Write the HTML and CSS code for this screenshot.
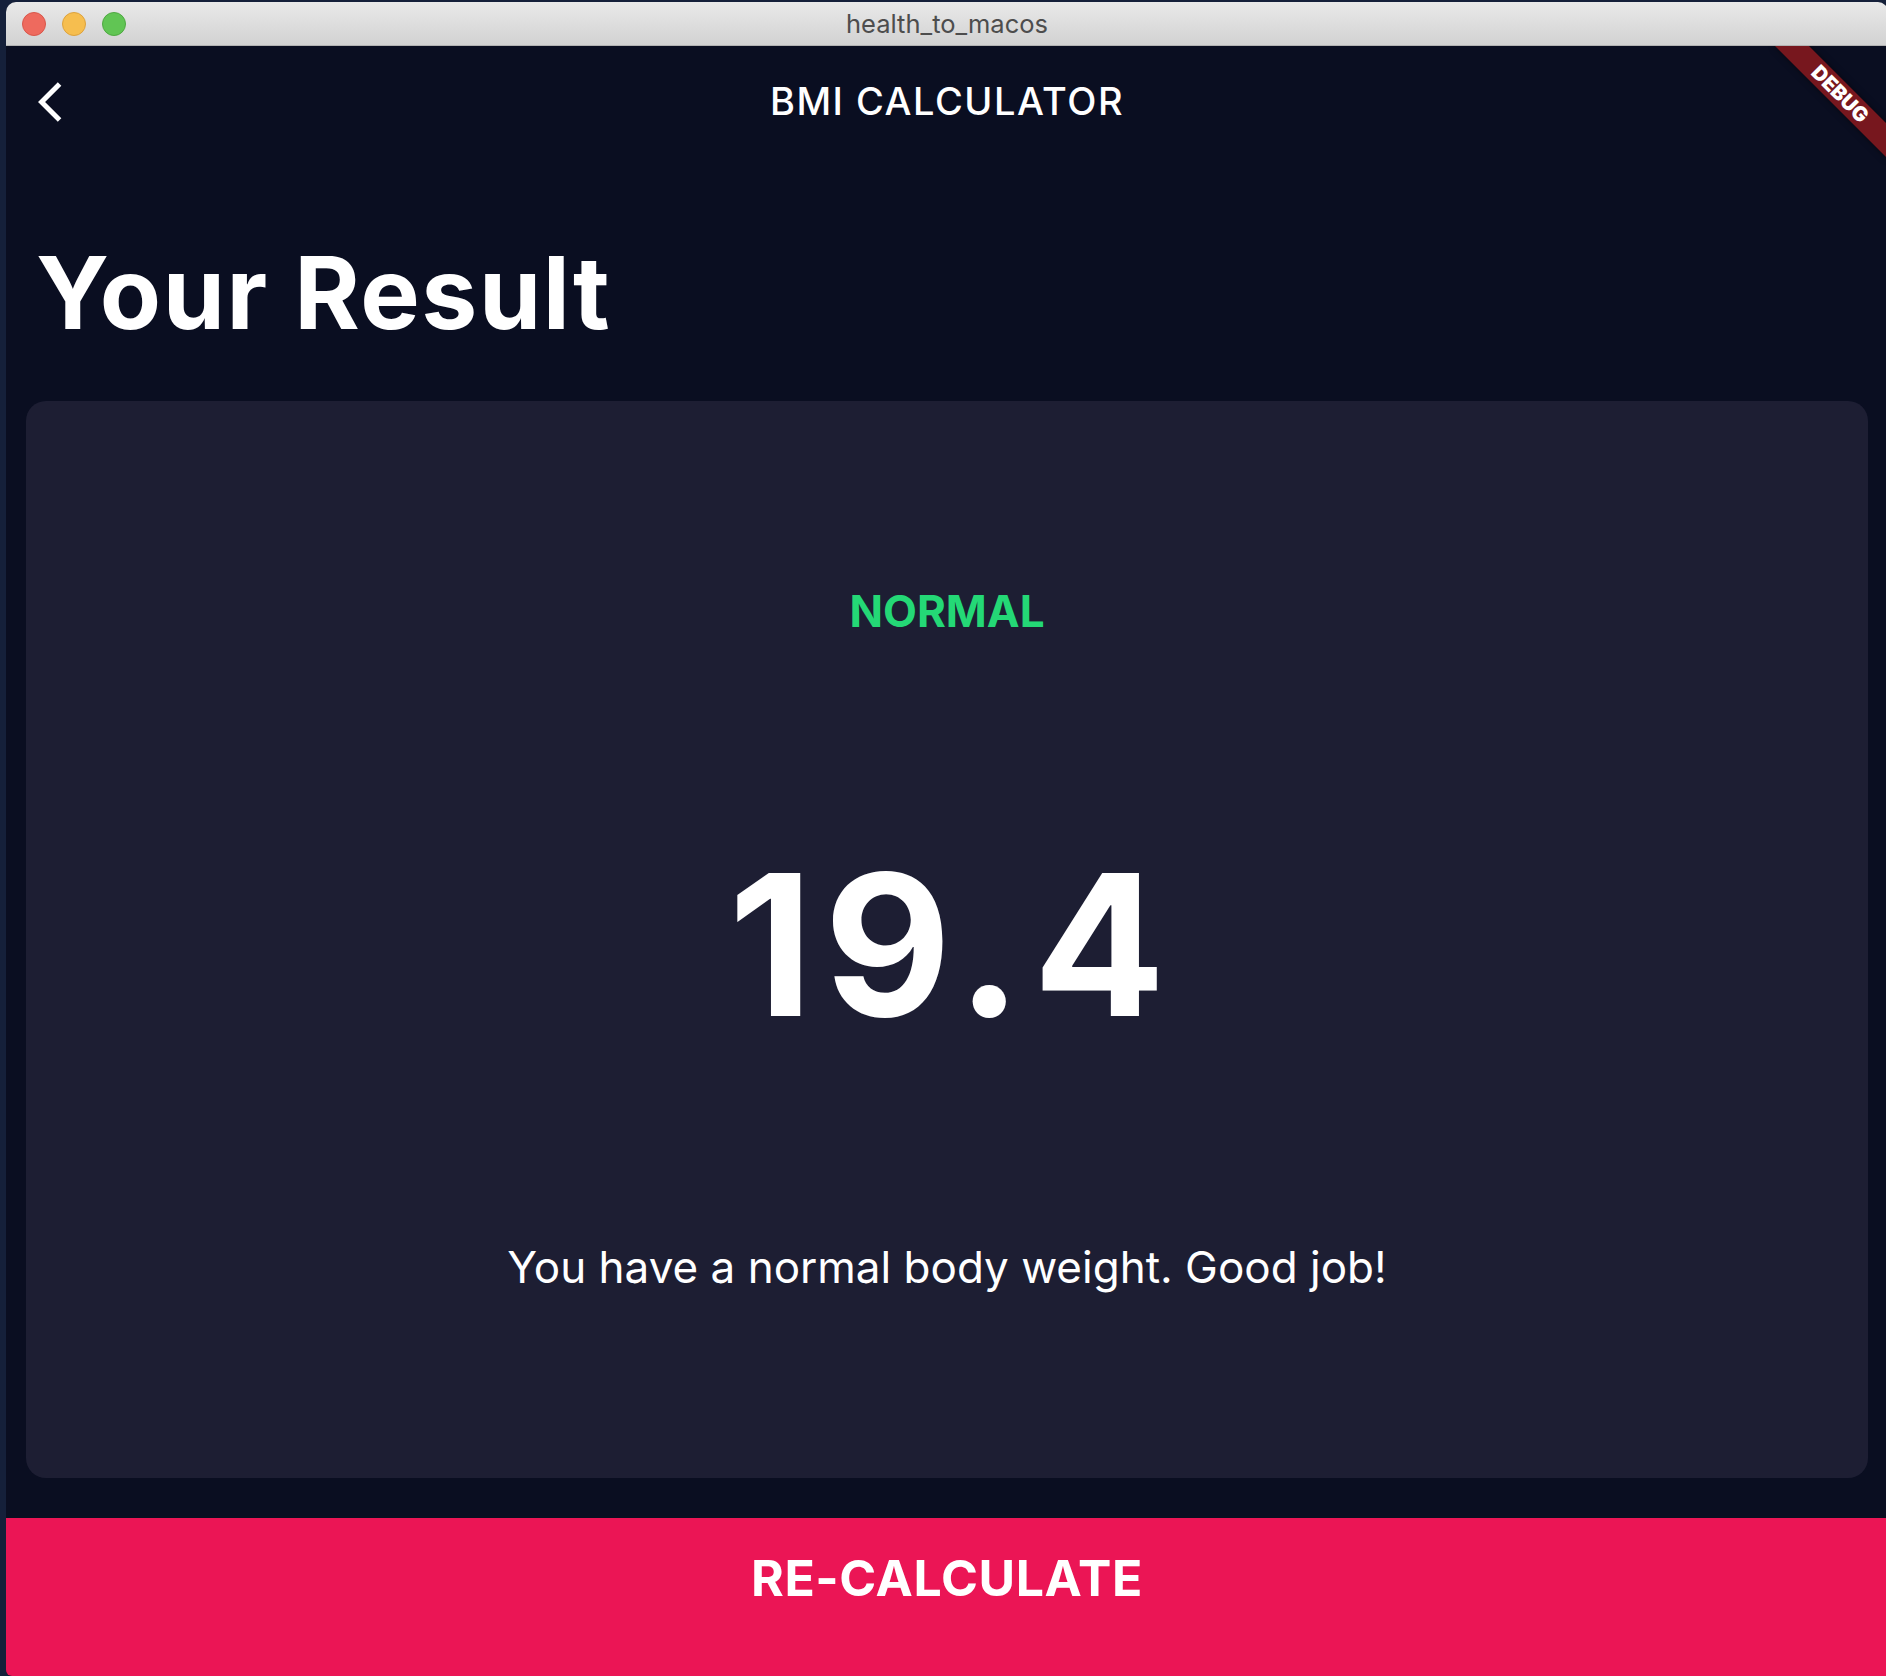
FILE: index.html
```html
<!DOCTYPE html>
<html lang="en">
<head>
<meta charset="utf-8">
<title>health_to_macos</title>
<link rel="stylesheet" href="styles.css">
</head>
<body>
<div class="window">
  <div class="titlebar">
    <div class="lights">
      <span class="light red"></span>
      <span class="light yellow"></span>
      <span class="light green"></span>
    </div>
    <div class="wintitle">health_to_macos</div>
    <div></div>
  </div>
  <div class="content">
    <header class="appbar">
      <button class="back" aria-label="Back">
        <svg viewBox="0 0 24 24" width="48" height="48"><path d="M11.67 3.87L9.9 2.1 0 12l9.9 9.9 1.77-1.77L3.54 12z" fill="#ffffff"/></svg>
      </button>
      <h1 class="apptitle">BMI CALCULATOR</h1>
      <div></div>
    </header>
    <main class="main">
      <div class="heading"><h2 class="result-title">Your Result</h2></div>
      <section class="card">
        <p class="status">NORMAL</p>
        <p class="bmi">19.4</p>
        <p class="desc">You have a normal body weight. Good job!</p>
      </section>
    </main>
    <button class="recalc">RE-CALCULATE</button>
    <div class="debug">DEBUG</div>
  </div>
</div>
</body>
</html>
```
FILE: styles.css
```css
html, body {
  margin: 0;
  height: 100%;
}
body {
  background: #15203a;
  overflow: hidden;
  font-family: Inter, "Noto Sans", sans-serif;
}
.window {
  margin: 2px 0 0 6px;
  width: 1882px;
  height: 1674px;
  border-radius: 10px 10px 0 6px;
  overflow: hidden;
  display: flex;
  flex-direction: column;
  background: #0a0e21;
}
.titlebar {
  flex: none;
  height: 43px;
  border-bottom: 1px solid #b3b3b3;
  background: linear-gradient(#e9e9e9, #d2d2d2);
  display: grid;
  grid-template-columns: 1fr auto 1fr;
  align-items: center;
}
.lights {
  display: flex;
  gap: 16px;
  padding-left: 16px;
}
.light {
  width: 22px;
  height: 22px;
  border-radius: 50%;
  border: 1px solid;
}
.red { background: #ee6a5e; border-color: #d8574b; }
.yellow { background: #f6be4f; border-color: #dca23e; }
.green { background: #61c554; border-color: #4fa842; }
.wintitle {
  font-size: 25.5px;
  color: #4d4d4d;
  line-height: 43px;
}
.content {
  flex: 1;
  position: relative;
  display: flex;
  flex-direction: column;
  overflow: hidden;
}
.appbar {
  flex: none;
  height: 112px;
  display: grid;
  grid-template-columns: 112px 1fr 112px;
  align-items: center;
}
.back {
  width: 112px;
  height: 112px;
  padding: 0;
  border: 0;
  background: none;
  display: flex;
  align-items: center;
  justify-content: center;
}
.back svg { display: block; }
.apptitle {
  margin: 0;
  text-align: center;
  font-size: 38px;
  font-weight: 500;
  letter-spacing: 1.5px;
  color: #ffffff;
  line-height: 1.2;
}
.main {
  flex: 1;
  display: flex;
  flex-direction: column;
  min-height: 0;
}
.heading {
  flex: none;
  height: 223px;
  box-sizing: border-box;
  padding: 0 30px 30px;
  display: flex;
  align-items: flex-end;
}
.result-title {
  margin: 0;
  font-size: 100px;
  font-weight: 700;
  letter-spacing: 1.6px;
  line-height: 1.17;
  color: #ffffff;
}
.card {
  flex: 1;
  margin: 20px;
  border-radius: 20px;
  background: #1d1e33;
  display: flex;
  flex-direction: column;
  align-items: center;
  justify-content: space-evenly;
}
.card p { margin: 0; line-height: 1.2; }
.status {
  font-size: 44px;
  font-weight: 700;
  color: #24d876;
}
.card .bmi {
  margin: 5px -11px -5px 0;
  font-size: 196px;
  font-weight: 700;
  letter-spacing: 11px;
  color: #ffffff;
}
.desc {
  font-size: 44px;
  font-weight: 400;
  color: #ffffff;
}
.recalc {
  flex: none;
  width: 100%;
  height: 158px;
  margin-top: 20px;
  padding: 0 0 38px;
  border: 0;
  background: #eb1555;
  color: #ffffff;
  font-family: inherit;
  font-size: 50px;
  font-weight: 700;
  letter-spacing: 0.6px;
  display: flex;
  align-items: center;
  justify-content: center;
}
.debug {
  position: absolute;
  left: 1754px;
  top: 36px;
  width: 160px;
  height: 24px;
  transform: rotate(45deg);
  background: rgba(183, 28, 28, 0.63);
  box-shadow: 0 0 6px rgba(0, 0, 0, 0.5);
  color: #ffffff;
  font-size: 20.4px;
  font-weight: 900;
  line-height: 24px;
  text-align: center;
}
```
